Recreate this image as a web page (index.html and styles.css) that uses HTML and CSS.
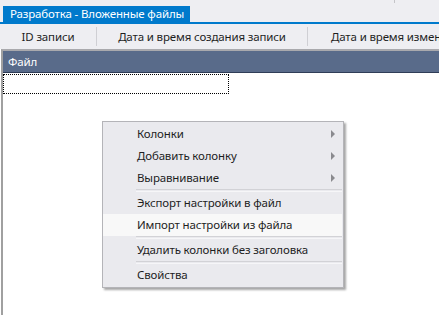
FILE: index.html
```html
<!DOCTYPE html>
<html lang="ru">
<head>
    <meta charset="UTF-8">
    <title>Разработка - Вложенные файлы</title>
    <link rel="stylesheet" href="styles.css">
</head>
<body>
    <div class="tabstrip">
        <div class="tab">Разработка - Вложенные файлы</div>
        <span class="tick"></span>
    </div>
    <div class="toolbar">
        <div class="col col-id">ID записи</div>
        <span class="sep"></span>
        <div class="col col-created">Дата и время создания записи</div>
        <span class="sep"></span>
        <div class="col col-changed">Дата и время изменения записи</div>
    </div>
    <div class="grid">
        <div class="grid-head">Файл</div>
        <div class="grid-body">
            <div class="row focused"></div>
        </div>
    </div>

    <div class="menu">
        <div class="item sub">Колонки</div>
        <div class="item sub">Добавить колонку</div>
        <div class="item sub">Выравнивание</div>
        <div class="divider"></div>
        <div class="item">Экспорт настройки в файл</div>
        <div class="item hover">Импорт настройки из файла</div>
        <div class="divider"></div>
        <div class="item">Удалить колонки без заголовка</div>
        <div class="divider"></div>
        <div class="item">Свойства</div>
    </div>
</body>
</html>
```

FILE: styles.css
```css
html, body {
    height: 100%;
}
body {
    margin: 0;
    display: flex;
    flex-direction: column;
    overflow: hidden;
    background: #ffffff;
    font-family: "Noto Sans", "Open Sans", sans-serif;
    font-size: 11.5px;
    letter-spacing: -0.15px;
    color: #1e1e1e;
    position: relative;
}
.tabstrip {
    flex: none;
    height: 16px;
    padding: 6px 0 0 3px;
    background: #eeeef2;
    border-bottom: 2px solid #007acc;
    position: relative;
}
.tab {
    display: inline-block;
    height: 16px;
    line-height: 16px;
    padding: 0 6px 0 7px;
    background: #007acc;
    color: #ffffff;
}
.tick {
    position: absolute;
    left: 394px;
    top: 0;
    width: 1px;
    height: 3px;
    background: #c4c4c8;
}
.toolbar {
    flex: none;
    display: flex;
    align-items: center;
    height: 25px;
    background: #eeeef2;
    white-space: nowrap;
    overflow: hidden;
}
.col {
    text-align: center;
    flex: none;
}
.col-id {
    width: 96px;
}
.col-created {
    width: 210px;
}
.col-changed {
    padding-left: 23px;
    text-align: left;
}
.sep {
    flex: none;
    width: 1px;
    height: 19px;
    background: #cfcfd4;
}
.grid {
    flex: 1;
    min-height: 0;
    border-top: 2px solid #a9a9ad;
    margin-left: 1px;
    border-left: 2px solid #a0a0a0;
}
.grid-head {
    height: 21px;
    line-height: 21px;
    padding-left: 5px;
    background: #596b8a;
    border-bottom: 1px solid #2f3d57;
    color: #ffffff;
}
.grid-body {
    padding-top: 1px;
}
.row {
    width: 224px;
    height: 18px;
}
.focused {
    border: 1px dotted #000000;
}
.menu {
    position: absolute;
    left: 102px;
    top: 121px;
    width: 240px;
    padding: 1px 0;
    background: #eaeaee;
    border: 1px solid #b4b4b8;
    box-shadow: 2px 2px 2px rgba(0, 0, 0, 0.35);
}
.item {
    position: relative;
    height: 22px;
    line-height: 22px;
    padding-left: 34px;
    margin-right: 1px;
}
.item.hover {
    background: #f8f8f8;
}
.sub::after {
    content: "";
    position: absolute;
    right: 7px;
    top: 7px;
    border-left: 4px solid #8a8a8e;
    border-top: 4px solid transparent;
    border-bottom: 4px solid transparent;
}
.divider {
    margin: 0 1px 0 33px;
    height: 1px;
    border-top: 1px solid #d2d2d6;
    border-bottom: 1px solid #f6f6f8;
}
```
